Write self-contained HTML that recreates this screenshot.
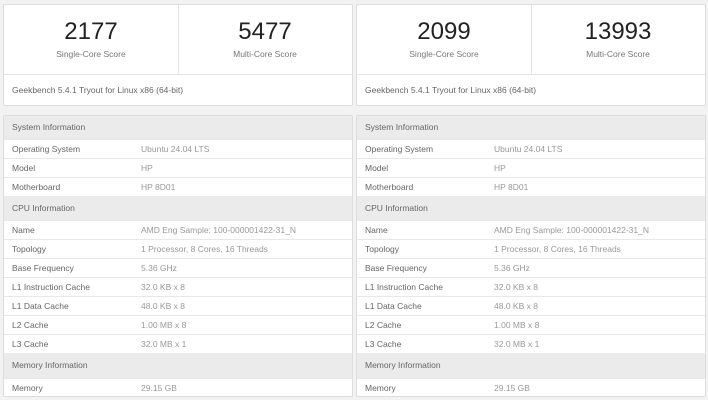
<!DOCTYPE html>
<html><head><style>
body{margin:0;width:708px;height:400px;background:#f2f2f2;font-family:"Liberation Sans",sans-serif;position:relative;overflow:hidden}
.card{position:absolute;background:#fff;border:1px solid #ddd;border-radius:2px;box-sizing:border-box}
.sc{position:absolute;top:0;height:69px;text-align:center;width:50%}
.sc .n{font-size:24px;color:#222;margin-top:13px;line-height:28px}
.sc .l{font-size:8.5px;color:#777;margin-top:3px}
.foot{position:absolute;top:69px;left:0;right:0;border-top:1px solid #e4e4e4;height:32px;font-size:8.5px;color:#666;padding-left:8px;line-height:30px}
.r{position:absolute;left:0;right:0;border-top:1px solid #e8e8e8;font-size:8.5px;color:#666;box-sizing:border-box;padding-left:8px}
.r .v{position:absolute;left:137px;color:#999}
.h{background:#ebebeb;color:#666;border-top:none}
</style></head><body>
<div class="card" style="left:3px;top:4px;width:350px;height:102px">
<div class="sc" style="left:0;border-right:1px solid #e4e4e4"><div class="n">2177</div><div class="l">Single-Core Score</div></div>
<div class="sc" style="left:50%"><div class="n">5477</div><div class="l">Multi-Core Score</div></div>
<div class="foot">Geekbench 5.4.1 Tryout for Linux x86 (64-bit)</div></div>
<div class="card" style="left:356px;top:4px;width:350px;height:102px">
<div class="sc" style="left:0;border-right:1px solid #e4e4e4"><div class="n">2099</div><div class="l">Single-Core Score</div></div>
<div class="sc" style="left:50%"><div class="n">13993</div><div class="l">Multi-Core Score</div></div>
<div class="foot">Geekbench 5.4.1 Tryout for Linux x86 (64-bit)</div></div>
<div id="t1" class="card" style="left:3px;top:115px;width:350px;height:282px"></div>
<div id="t2" class="card" style="left:356px;top:115px;width:350px;height:282px"></div>
<script>
var rows=[["h","System Information","",0,23],["","Operating System","Ubuntu 24.04 LTS",23,19],["","Model","HP",42,19],["","Motherboard","HP 8D01",61,19],["h","CPU Information","",80,24],["","Name","AMD Eng Sample: 100-000001422-31_N",104,19],["","Topology","1 Processor, 8 Cores, 16 Threads",123,19],["","Base Frequency","5.36 GHz",142,19],["","L1 Instruction Cache","32.0 KB x 8",161,19],["","L1 Data Cache","48.0 KB x 8",180,19],["","L2 Cache","1.00 MB x 8",199,19],["","L3 Cache","32.0 MB x 1",218,19],["h","Memory Information","",237,25],["","Memory","29.15 GB",262,18]];
["t1","t2"].forEach(function(id){var c=document.getElementById(id),s="";rows.forEach(function(r){s+='<div class="r '+r[0]+'" style="top:'+r[3]+'px;height:'+r[4]+'px;line-height:'+r[4]+'px">'+r[1]+(r[2]?'<span class="v">'+r[2]+'</span>':'')+'</div>';});c.innerHTML=s;});
</script>
</body></html>
